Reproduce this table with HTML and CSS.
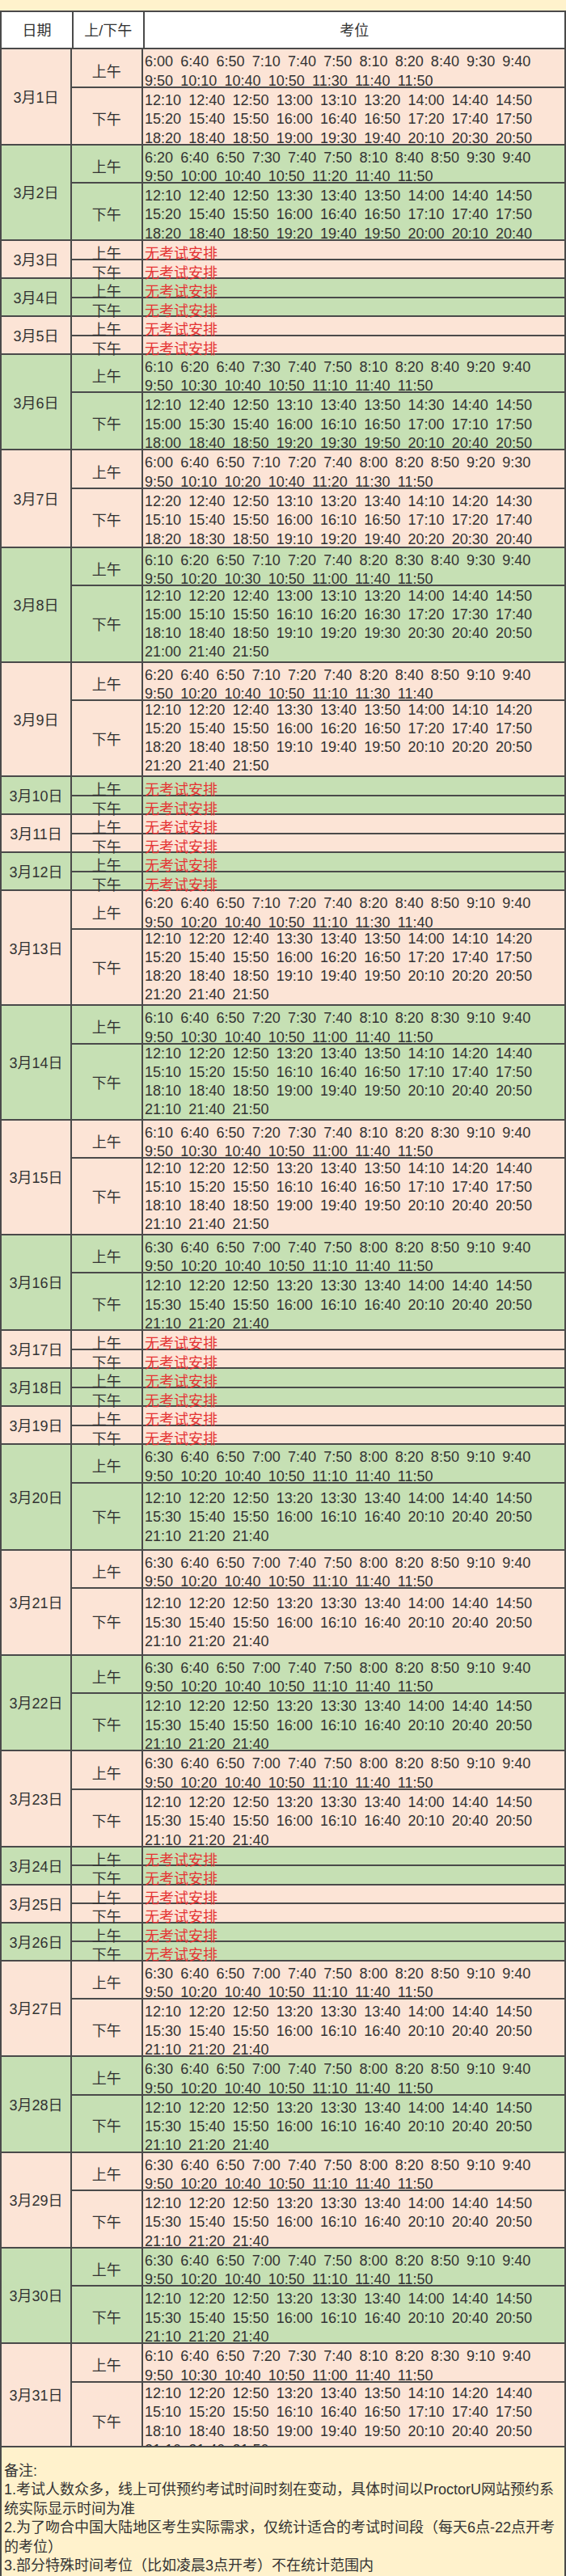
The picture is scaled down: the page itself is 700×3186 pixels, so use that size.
FILE: index.html
```html
<!DOCTYPE html>
<html lang="zh-CN">
<head>
<meta charset="utf-8">
<title>3月考位</title>
<link rel="stylesheet" href="styles.css">
</head>
<body>
<div class="sheet">
  <div class="topband"></div>
  <div class="table">
    <div class="head">
      <div class="hc">日期</div>
      <div class="hc">上/下午</div>
      <div class="hc">考位</div>
    </div>

    <div class="day pink">
      <div class="date">3月1日</div>
      <div class="halves">
        <div class="half am n2"><div class="ampm">上午</div><div class="slots">6:00 6:40 6:50 7:10 7:40 7:50 8:10 8:20 8:40 9:30 9:40 9:50 10:10 10:40 10:50 11:30 11:40 11:50</div></div>
        <div class="half pm n3"><div class="ampm">下午</div><div class="slots">12:10 12:40 12:50 13:00 13:10 13:20 14:00 14:40 14:50 15:20 15:40 15:50 16:00 16:40 16:50 17:20 17:40 17:50 18:20 18:40 18:50 19:00 19:30 19:40 20:10 20:30 20:50</div></div>
      </div>
    </div>

    <div class="day green">
      <div class="date">3月2日</div>
      <div class="halves">
        <div class="half am n2"><div class="ampm">上午</div><div class="slots">6:20 6:40 6:50 7:30 7:40 7:50 8:10 8:40 8:50 9:30 9:40 9:50 10:00 10:40 10:50 11:20 11:40 11:50</div></div>
        <div class="half pm n3"><div class="ampm">下午</div><div class="slots">12:10 12:40 12:50 13:30 13:40 13:50 14:00 14:40 14:50 15:20 15:40 15:50 16:00 16:40 16:50 17:10 17:40 17:50 18:20 18:40 18:50 19:20 19:40 19:50 20:00 20:10 20:40</div></div>
      </div>
    </div>

    <div class="day pink">
      <div class="date">3月3日</div>
      <div class="halves">
        <div class="half am n1"><div class="ampm">上午</div><div class="slots none">无考试安排</div></div>
        <div class="half pm n1"><div class="ampm">下午</div><div class="slots none">无考试安排</div></div>
      </div>
    </div>

    <div class="day green">
      <div class="date">3月4日</div>
      <div class="halves">
        <div class="half am n1"><div class="ampm">上午</div><div class="slots none">无考试安排</div></div>
        <div class="half pm n1"><div class="ampm">下午</div><div class="slots none">无考试安排</div></div>
      </div>
    </div>

    <div class="day pink">
      <div class="date">3月5日</div>
      <div class="halves">
        <div class="half am n1"><div class="ampm">上午</div><div class="slots none">无考试安排</div></div>
        <div class="half pm n1"><div class="ampm">下午</div><div class="slots none">无考试安排</div></div>
      </div>
    </div>

    <div class="day green">
      <div class="date">3月6日</div>
      <div class="halves">
        <div class="half am n2"><div class="ampm">上午</div><div class="slots">6:10 6:20 6:40 7:30 7:40 7:50 8:10 8:20 8:40 9:20 9:40 9:50 10:30 10:40 10:50 11:10 11:40 11:50</div></div>
        <div class="half pm n3"><div class="ampm">下午</div><div class="slots">12:10 12:40 12:50 13:10 13:40 13:50 14:30 14:40 14:50 15:00 15:30 15:40 16:00 16:10 16:50 17:00 17:10 17:50 18:00 18:40 18:50 19:20 19:30 19:50 20:10 20:40 20:50</div></div>
      </div>
    </div>

    <div class="day pink">
      <div class="date">3月7日</div>
      <div class="halves">
        <div class="half am n2"><div class="ampm">上午</div><div class="slots">6:00 6:40 6:50 7:10 7:20 7:40 8:00 8:20 8:50 9:20 9:30 9:50 10:10 10:20 10:40 11:20 11:30 11:50</div></div>
        <div class="half pm n3b"><div class="ampm">下午</div><div class="slots">12:20 12:40 12:50 13:10 13:20 13:40 14:10 14:20 14:30 15:10 15:40 15:50 16:00 16:10 16:50 17:10 17:20 17:40 18:20 18:30 18:50 19:10 19:20 19:40 20:20 20:30 20:40</div></div>
      </div>
    </div>

    <div class="day green">
      <div class="date">3月8日</div>
      <div class="halves">
        <div class="half am n2"><div class="ampm">上午</div><div class="slots">6:10 6:20 6:50 7:10 7:20 7:40 8:20 8:30 8:40 9:30 9:40 9:50 10:20 10:30 10:50 11:00 11:40 11:50</div></div>
        <div class="half pm n4"><div class="ampm">下午</div><div class="slots">12:10 12:20 12:40 13:00 13:10 13:20 14:00 14:40 14:50 15:00 15:10 15:50 16:10 16:20 16:30 17:20 17:30 17:40 18:10 18:40 18:50 19:10 19:20 19:30 20:30 20:40 20:50 21:00 21:40 21:50</div></div>
      </div>
    </div>

    <div class="day pink">
      <div class="date">3月9日</div>
      <div class="halves">
        <div class="half am n2"><div class="ampm">上午</div><div class="slots">6:20 6:40 6:50 7:10 7:20 7:40 8:20 8:40 8:50 9:10 9:40 9:50 10:20 10:40 10:50 11:10 11:30 11:40</div></div>
        <div class="half pm n4"><div class="ampm">下午</div><div class="slots">12:10 12:20 12:40 13:30 13:40 13:50 14:00 14:10 14:20 15:20 15:40 15:50 16:00 16:20 16:50 17:20 17:40 17:50 18:20 18:40 18:50 19:10 19:40 19:50 20:10 20:20 20:50 21:20 21:40 21:50</div></div>
      </div>
    </div>

    <div class="day green">
      <div class="date">3月10日</div>
      <div class="halves">
        <div class="half am n1"><div class="ampm">上午</div><div class="slots none">无考试安排</div></div>
        <div class="half pm n1"><div class="ampm">下午</div><div class="slots none">无考试安排</div></div>
      </div>
    </div>

    <div class="day pink">
      <div class="date">3月11日</div>
      <div class="halves">
        <div class="half am n1"><div class="ampm">上午</div><div class="slots none">无考试安排</div></div>
        <div class="half pm n1"><div class="ampm">下午</div><div class="slots none">无考试安排</div></div>
      </div>
    </div>

    <div class="day green">
      <div class="date">3月12日</div>
      <div class="halves">
        <div class="half am n1"><div class="ampm">上午</div><div class="slots none">无考试安排</div></div>
        <div class="half pm n1"><div class="ampm">下午</div><div class="slots none">无考试安排</div></div>
      </div>
    </div>

    <div class="day pink">
      <div class="date">3月13日</div>
      <div class="halves">
        <div class="half am n2"><div class="ampm">上午</div><div class="slots">6:20 6:40 6:50 7:10 7:20 7:40 8:20 8:40 8:50 9:10 9:40 9:50 10:20 10:40 10:50 11:10 11:30 11:40</div></div>
        <div class="half pm n4"><div class="ampm">下午</div><div class="slots">12:10 12:20 12:40 13:30 13:40 13:50 14:00 14:10 14:20 15:20 15:40 15:50 16:00 16:20 16:50 17:20 17:40 17:50 18:20 18:40 18:50 19:10 19:40 19:50 20:10 20:20 20:50 21:20 21:40 21:50</div></div>
      </div>
    </div>

    <div class="day green">
      <div class="date">3月14日</div>
      <div class="halves">
        <div class="half am n2"><div class="ampm">上午</div><div class="slots">6:10 6:40 6:50 7:20 7:30 7:40 8:10 8:20 8:30 9:10 9:40 9:50 10:30 10:40 10:50 11:00 11:40 11:50</div></div>
        <div class="half pm n4"><div class="ampm">下午</div><div class="slots">12:10 12:20 12:50 13:20 13:40 13:50 14:10 14:20 14:40 15:10 15:20 15:50 16:10 16:40 16:50 17:10 17:40 17:50 18:10 18:40 18:50 19:00 19:40 19:50 20:10 20:40 20:50 21:10 21:40 21:50</div></div>
      </div>
    </div>

    <div class="day pink">
      <div class="date">3月15日</div>
      <div class="halves">
        <div class="half am n2"><div class="ampm">上午</div><div class="slots">6:10 6:40 6:50 7:20 7:30 7:40 8:10 8:20 8:30 9:10 9:40 9:50 10:30 10:40 10:50 11:00 11:40 11:50</div></div>
        <div class="half pm n4"><div class="ampm">下午</div><div class="slots">12:10 12:20 12:50 13:20 13:40 13:50 14:10 14:20 14:40 15:10 15:20 15:50 16:10 16:40 16:50 17:10 17:40 17:50 18:10 18:40 18:50 19:00 19:40 19:50 20:10 20:40 20:50 21:10 21:40 21:50</div></div>
      </div>
    </div>

    <div class="day green">
      <div class="date">3月16日</div>
      <div class="halves">
        <div class="half am n2"><div class="ampm">上午</div><div class="slots">6:30 6:40 6:50 7:00 7:40 7:50 8:00 8:20 8:50 9:10 9:40 9:50 10:20 10:40 10:50 11:10 11:40 11:50</div></div>
        <div class="half pm n3"><div class="ampm">下午</div><div class="slots">12:10 12:20 12:50 13:20 13:30 13:40 14:00 14:40 14:50 15:30 15:40 15:50 16:00 16:10 16:40 20:10 20:40 20:50 21:10 21:20 21:40</div></div>
      </div>
    </div>

    <div class="day pink">
      <div class="date">3月17日</div>
      <div class="halves">
        <div class="half am n1"><div class="ampm">上午</div><div class="slots none">无考试安排</div></div>
        <div class="half pm n1"><div class="ampm">下午</div><div class="slots none">无考试安排</div></div>
      </div>
    </div>

    <div class="day green">
      <div class="date">3月18日</div>
      <div class="halves">
        <div class="half am n1"><div class="ampm">上午</div><div class="slots none">无考试安排</div></div>
        <div class="half pm n1"><div class="ampm">下午</div><div class="slots none">无考试安排</div></div>
      </div>
    </div>

    <div class="day pink">
      <div class="date">3月19日</div>
      <div class="halves">
        <div class="half am n1"><div class="ampm">上午</div><div class="slots none">无考试安排</div></div>
        <div class="half pm n1"><div class="ampm">下午</div><div class="slots none">无考试安排</div></div>
      </div>
    </div>

    <div class="day green">
      <div class="date">3月20日</div>
      <div class="halves">
        <div class="half am n2"><div class="ampm">上午</div><div class="slots">6:30 6:40 6:50 7:00 7:40 7:50 8:00 8:20 8:50 9:10 9:40 9:50 10:20 10:40 10:50 11:10 11:40 11:50</div></div>
        <div class="half pm tall"><div class="ampm">下午</div><div class="slots">12:10 12:20 12:50 13:20 13:30 13:40 14:00 14:40 14:50 15:30 15:40 15:50 16:00 16:10 16:40 20:10 20:40 20:50 21:10 21:20 21:40</div></div>
      </div>
    </div>

    <div class="day pink">
      <div class="date">3月21日</div>
      <div class="halves">
        <div class="half am n2"><div class="ampm">上午</div><div class="slots">6:30 6:40 6:50 7:00 7:40 7:50 8:00 8:20 8:50 9:10 9:40 9:50 10:20 10:40 10:50 11:10 11:40 11:50</div></div>
        <div class="half pm tall"><div class="ampm">下午</div><div class="slots">12:10 12:20 12:50 13:20 13:30 13:40 14:00 14:40 14:50 15:30 15:40 15:50 16:00 16:10 16:40 20:10 20:40 20:50 21:10 21:20 21:40</div></div>
      </div>
    </div>

    <div class="day green">
      <div class="date">3月22日</div>
      <div class="halves">
        <div class="half am n2"><div class="ampm">上午</div><div class="slots">6:30 6:40 6:50 7:00 7:40 7:50 8:00 8:20 8:50 9:10 9:40 9:50 10:20 10:40 10:50 11:10 11:40 11:50</div></div>
        <div class="half pm n3"><div class="ampm">下午</div><div class="slots">12:10 12:20 12:50 13:20 13:30 13:40 14:00 14:40 14:50 15:30 15:40 15:50 16:00 16:10 16:40 20:10 20:40 20:50 21:10 21:20 21:40</div></div>
      </div>
    </div>

    <div class="day pink">
      <div class="date">3月23日</div>
      <div class="halves">
        <div class="half am n2"><div class="ampm">上午</div><div class="slots">6:30 6:40 6:50 7:00 7:40 7:50 8:00 8:20 8:50 9:10 9:40 9:50 10:20 10:40 10:50 11:10 11:40 11:50</div></div>
        <div class="half pm n3"><div class="ampm">下午</div><div class="slots">12:10 12:20 12:50 13:20 13:30 13:40 14:00 14:40 14:50 15:30 15:40 15:50 16:00 16:10 16:40 20:10 20:40 20:50 21:10 21:20 21:40</div></div>
      </div>
    </div>

    <div class="day green">
      <div class="date">3月24日</div>
      <div class="halves">
        <div class="half am n1"><div class="ampm">上午</div><div class="slots none">无考试安排</div></div>
        <div class="half pm n1"><div class="ampm">下午</div><div class="slots none">无考试安排</div></div>
      </div>
    </div>

    <div class="day pink">
      <div class="date">3月25日</div>
      <div class="halves">
        <div class="half am n1"><div class="ampm">上午</div><div class="slots none">无考试安排</div></div>
        <div class="half pm n1"><div class="ampm">下午</div><div class="slots none">无考试安排</div></div>
      </div>
    </div>

    <div class="day green">
      <div class="date">3月26日</div>
      <div class="halves">
        <div class="half am n1"><div class="ampm">上午</div><div class="slots none">无考试安排</div></div>
        <div class="half pm n1"><div class="ampm">下午</div><div class="slots none">无考试安排</div></div>
      </div>
    </div>

    <div class="day pink">
      <div class="date">3月27日</div>
      <div class="halves">
        <div class="half am n2"><div class="ampm">上午</div><div class="slots">6:30 6:40 6:50 7:00 7:40 7:50 8:00 8:20 8:50 9:10 9:40 9:50 10:20 10:40 10:50 11:10 11:40 11:50</div></div>
        <div class="half pm n3"><div class="ampm">下午</div><div class="slots">12:10 12:20 12:50 13:20 13:30 13:40 14:00 14:40 14:50 15:30 15:40 15:50 16:00 16:10 16:40 20:10 20:40 20:50 21:10 21:20 21:40</div></div>
      </div>
    </div>

    <div class="day green">
      <div class="date">3月28日</div>
      <div class="halves">
        <div class="half am n2"><div class="ampm">上午</div><div class="slots">6:30 6:40 6:50 7:00 7:40 7:50 8:00 8:20 8:50 9:10 9:40 9:50 10:20 10:40 10:50 11:10 11:40 11:50</div></div>
        <div class="half pm n3"><div class="ampm">下午</div><div class="slots">12:10 12:20 12:50 13:20 13:30 13:40 14:00 14:40 14:50 15:30 15:40 15:50 16:00 16:10 16:40 20:10 20:40 20:50 21:10 21:20 21:40</div></div>
      </div>
    </div>

    <div class="day pink">
      <div class="date">3月29日</div>
      <div class="halves">
        <div class="half am n2"><div class="ampm">上午</div><div class="slots">6:30 6:40 6:50 7:00 7:40 7:50 8:00 8:20 8:50 9:10 9:40 9:50 10:20 10:40 10:50 11:10 11:40 11:50</div></div>
        <div class="half pm n3"><div class="ampm">下午</div><div class="slots">12:10 12:20 12:50 13:20 13:30 13:40 14:00 14:40 14:50 15:30 15:40 15:50 16:00 16:10 16:40 20:10 20:40 20:50 21:10 21:20 21:40</div></div>
      </div>
    </div>

    <div class="day green">
      <div class="date">3月30日</div>
      <div class="halves">
        <div class="half am n2"><div class="ampm">上午</div><div class="slots">6:30 6:40 6:50 7:00 7:40 7:50 8:00 8:20 8:50 9:10 9:40 9:50 10:20 10:40 10:50 11:10 11:40 11:50</div></div>
        <div class="half pm n3"><div class="ampm">下午</div><div class="slots">12:10 12:20 12:50 13:20 13:30 13:40 14:00 14:40 14:50 15:30 15:40 15:50 16:00 16:10 16:40 20:10 20:40 20:50 21:10 21:20 21:40</div></div>
      </div>
    </div>

    <div class="day pink">
      <div class="date">3月31日</div>
      <div class="halves">
        <div class="half am n2"><div class="ampm">上午</div><div class="slots">6:10 6:40 6:50 7:20 7:30 7:40 8:10 8:20 8:30 9:10 9:40 9:50 10:30 10:40 10:50 11:00 11:40 11:50</div></div>
        <div class="half pm clip"><div class="ampm">下午</div><div class="slots top">12:10 12:20 12:50 13:20 13:40 13:50 14:10 14:20 14:40 15:10 15:20 15:50 16:10 16:40 16:50 17:10 17:40 17:50 18:10 18:40 18:50 19:00 19:40 19:50 20:10 20:40 20:50 21:10 21:40 21:50</div></div>
      </div>
    </div>
  </div>

  <div class="notes">
    <p>备注:</p>
    <p>1.考试人数众多，线上可供预约考试时间时刻在变动，具体时间以ProctorU网站预约系统实际显示时间为准</p>
    <p>2.为了吻合中国大陆地区考生实际需求，仅统计适合的考试时间段（每天6点-22点开考的考位）</p>
    <p>3.部分特殊时间考位（比如凌晨3点开考）不在统计范围内</p>
  </div>
</div>
</body>
</html>
```

FILE: styles.css
```css
* {
  box-sizing: border-box;
}

html, body {
  margin: 0;
  padding: 0;
}

body {
  font-family: "Liberation Sans", "Noto Sans CJK SC", sans-serif;
  font-size: 18px;
  color: #333333;
  background: #ffffff;
}

.sheet {
  width: 700px;
  min-height: 100vh;
  display: flex;
  flex-direction: column;
}

.topband {
  height: 12.5px;
  background: #fff2cc;
}

.table {
  border-top: 2px solid #4a4a4a;
  border-left: 2px solid #4a4a4a;
  border-right: 2px solid #4a4a4a;
}

.head {
  display: grid;
  grid-template-columns: 87px 87.5px 1fr;
  height: 46.8px;
  background: #ffffff;
  border-bottom: 2px solid #4a4a4a;
}

.hc {
  display: flex;
  align-items: center;
  justify-content: center;
  padding-top: 4px;
  line-height: 23.4px;
}

.hc + .hc {
  border-left: 2px solid #4a4a4a;
}

.day {
  display: grid;
  grid-template-columns: 87px 1fr;
  border-bottom: 2px solid #4a4a4a;
}

.pink {
  background: #fce4d6;
}

.green {
  background: #c6e0b4;
}

.date {
  display: flex;
  align-items: center;
  justify-content: center;
  padding-top: 4px;
  border-right: 2px solid #4a4a4a;
  line-height: 23.4px;
}

.halves {
  display: flex;
  flex-direction: column;
}

.half {
  display: grid;
  grid-template-columns: 87.5px 1fr;
}

.half.am {
  border-bottom: 2px solid #4a4a4a;
}

.ampm {
  display: flex;
  align-items: center;
  justify-content: center;
  padding-top: 5px;
  border-right: 2px solid #4a4a4a;
  line-height: 23.4px;
}

.slots {
  display: flex;
  flex-wrap: wrap;
  align-content: center;
  padding: 4px 2px 0 2.5px;
  line-height: 23.4px;
  word-spacing: 4.2px;
}

.n4 .slots {
  padding-top: 0.4px;
  line-height: 23px;
}

.slots.top {
  align-content: flex-start;
  padding-top: 2.2px;
}

.slots.none {
  color: #e53333;
  padding-top: 5px;
}

.am.n1 { height: 23.5px; }
.pm.n1 { height: 21.5px; }
.am.n2 { height: 47.4px; }
.pm.n3 { height: 69px; }
.pm.n3b { height: 71px; }
.pm.n4 { height: 92.4px; }
.pm.tall { height: 81px; }
.pm.clip {
  height: 78px;
  overflow: hidden;
}

.notes {
  flex: 1;
  background: #fff2cc;
  border-left: 2px solid #4a4a4a;
  border-right: 2px solid #4a4a4a;
  padding: 18px 2px 0 3px;
  line-height: 23.5px;
}

.notes p {
  margin: 0;
}
```
